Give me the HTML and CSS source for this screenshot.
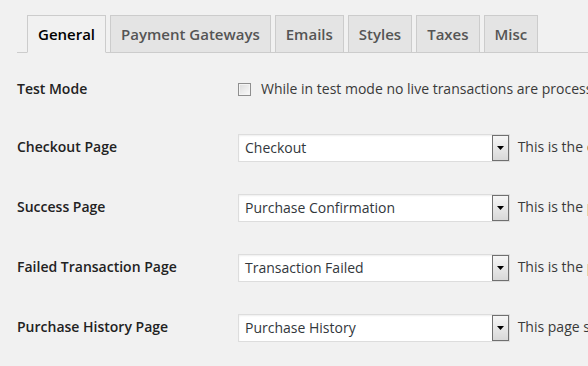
FILE: index.html
```html
<!DOCTYPE html>
<html lang="en">
<head>
  <meta charset="UTF-8">
  <title>Settings</title>
  <link rel="stylesheet" href="styles.css">
</head>
<body>
  <div class="wrap">
    <nav class="nav-tab-wrapper">
      <a class="nav-tab nav-tab-active" href="#">General</a>
      <a class="nav-tab" href="#">Payment Gateways</a>
      <a class="nav-tab" href="#">Emails</a>
      <a class="nav-tab" href="#">Styles</a>
      <a class="nav-tab" href="#">Taxes</a>
      <a class="nav-tab" href="#">Misc</a>
    </nav>

    <table class="form-table">
      <tr>
        <th>Test Mode</th>
        <td>
          <label class="check-label"><span class="checkbox"></span>While in test mode no live transactions are process</label>
        </td>
      </tr>
      <tr>
        <th>Checkout Page</th>
        <td>
          <div class="select"><span class="select-value">Checkout</span><span class="select-btn"><svg width="7" height="4" viewBox="0 0 7 4"><path d="M0 0h7L3.5 4z" fill="#000"/></svg></span></div>
          <span class="desc">This is the c</span>
        </td>
      </tr>
      <tr>
        <th>Success Page</th>
        <td>
          <div class="select"><span class="select-value">Purchase Confirmation</span><span class="select-btn"><svg width="7" height="4" viewBox="0 0 7 4"><path d="M0 0h7L3.5 4z" fill="#000"/></svg></span></div>
          <span class="desc">This is the p</span>
        </td>
      </tr>
      <tr>
        <th>Failed Transaction Page</th>
        <td>
          <div class="select"><span class="select-value">Transaction Failed</span><span class="select-btn"><svg width="7" height="4" viewBox="0 0 7 4"><path d="M0 0h7L3.5 4z" fill="#000"/></svg></span></div>
          <span class="desc">This is the p</span>
        </td>
      </tr>
      <tr>
        <th>Purchase History Page</th>
        <td>
          <div class="select"><span class="select-value">Purchase History</span><span class="select-btn"><svg width="7" height="4" viewBox="0 0 7 4"><path d="M0 0h7L3.5 4z" fill="#000"/></svg></span></div>
          <span class="desc">This page s</span>
        </td>
      </tr>
    </table>
  </div>
</body>
</html>
```

FILE: styles.css
```css
html { overflow:hidden; }
body { margin:0; background:#f1f1f1; font-family:"Open Sans",sans-serif; font-size:14px; color:#444; }
.wrap { padding:15px 0 0 17px; }

.nav-tab-wrapper { display:flex; gap:4px; padding-left:10px; border-bottom:1px solid #ccc; white-space:nowrap; }
.nav-tab { display:block; margin-bottom:-1px; padding:6px 10px; border:1px solid #ccc; background:#e4e4e4; color:#555; font-size:15px; font-weight:600; line-height:24px; text-decoration:none; }
.nav-tab-active { background:#f1f1f1; border-bottom-color:#f1f1f1; color:#000; }

.form-table { margin-top:7px; border-collapse:collapse; white-space:nowrap; }
.form-table th { width:200px; min-width:200px; padding:20px 10px 20px 0; text-align:left; vertical-align:top; font-weight:600; line-height:1.3; color:#222; }
.form-table td { padding:15px 10px; vertical-align:middle; line-height:24px; }

.check-label { display:flex; align-items:center; gap:10px; margin-left:1px; color:#3a3a3a; }
.checkbox { width:11px; height:11px; border:1px solid #8f8f8f; background:linear-gradient(135deg,#dcdcdc,#fafafa); box-shadow:inset 0 0 0 1px #f4f4f4; }

.select { display:inline-flex; align-items:stretch; box-sizing:border-box; width:272px; height:28px; margin:1px; vertical-align:middle; background:#fff; border:1px solid #ddd; box-shadow:inset 0 1px 2px rgba(0,0,0,.07); color:#32373c; }
.select-value { flex:1; padding-left:6px; line-height:26px; }
.select-btn { display:flex; align-items:center; justify-content:center; width:15px; border:1px solid #707070; background:linear-gradient(#f6f6f6,#d8d8d8); }
.desc { margin-left:3px; color:#3a3a3a; }
```
